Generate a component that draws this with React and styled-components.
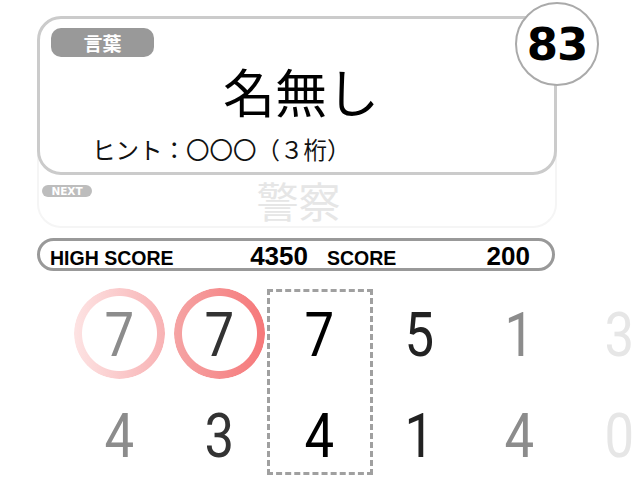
import React from "react";
import styled, { createGlobalStyle } from "styled-components";

const GlobalStyle = createGlobalStyle`
  html, body {
    margin: 0;
    padding: 0;
    background: #fff;
    overflow: hidden;
  }
  body {
    font-family: "Noto Sans CJK JP", "Noto Sans", sans-serif;
    color: #000;
  }
`;

const columns = [
  { top: "7", bottom: "4", tone: "#8c8c8c", ring: ["#fde3e3", "#f8b2b4"] },
  { top: "7", bottom: "3", tone: "#333333", ring: ["#f5a4a4", "#f6787a"] },
  { top: "7", bottom: "4", tone: "#000000", current: true },
  { top: "5", bottom: "1", tone: "#222222" },
  { top: "1", bottom: "4", tone: "#8c8c8c" },
  { top: "3", bottom: "0", tone: "#e6e6e6" },
];

const App = () => {
  return (
    <>
      <GlobalStyle />
      <Page>
        <Cards>
          <WordCard>
            <Badge>言葉</Badge>
            <Word>名無し</Word>
            <Hint>ヒント：〇〇〇（３桁）</Hint>
            <Timer>83</Timer>
          </WordCard>
          <NextCard>
            <NextBadge>NEXT</NextBadge>
            <NextWord>警察</NextWord>
          </NextCard>
        </Cards>
        <ScoreBar>
          <ScoreCell>
            <ScoreLabel>HIGH SCORE</ScoreLabel>
            <ScoreValue>4350</ScoreValue>
          </ScoreCell>
          <ScoreCell>
            <ScoreLabel>SCORE</ScoreLabel>
            <ScoreValue>200</ScoreValue>
          </ScoreCell>
        </ScoreBar>
        <DigitRow>
          {columns.map((col, i) => (
            <DigitColumn key={i} current={col.current}>
              <Digit tone={col.tone} ring={col.ring}>
                <Glyph>{col.top}</Glyph>
              </Digit>
              <Digit tone={col.tone}>
                <Glyph>{col.bottom}</Glyph>
              </Digit>
            </DigitColumn>
          ))}
        </DigitRow>
      </Page>
    </>
  );
};

export default App;

const Page = styled.div`
  width: 640px;
  height: 500px;
  box-sizing: border-box;
  padding: 16px 0 0 37px;
  overflow: hidden;
`;

const Cards = styled.div`
  width: 520px;
  display: flex;
  flex-direction: column;
`;

const WordCard = styled.div`
  position: relative;
  z-index: 1;
  height: 159px;
  box-sizing: border-box;
  border: 3px solid #cbcbcb;
  border-radius: 24px;
  background: #fff;
  padding: 9px 11px;
  display: flex;
  flex-direction: column;
`;

const Badge = styled.div`
  align-self: flex-start;
  width: 103px;
  height: 29px;
  border-radius: 10px;
  background: #999;
  color: #fff;
  font-weight: 700;
  font-size: 19px;
  line-height: 29px;
  text-align: center;
`;

const Word = styled.div`
  margin-top: 8px;
  padding-left: 8px;
  font-size: 52px;
  line-height: 52px;
  text-align: center;
  font-weight: 400;
`;

const Hint = styled.div`
  margin-top: 21px;
  padding-left: 41px;
  font-size: 23.5px;
  line-height: 23px;
  color: #111;
`;

const Timer = styled.div`
  position: absolute;
  top: -17px;
  left: 475px;
  width: 84px;
  height: 84px;
  box-sizing: border-box;
  border: 2px solid #aaa;
  border-radius: 50%;
  background: #fff;
  display: flex;
  align-items: center;
  justify-content: center;
  font-family: "DejaVu Sans", sans-serif;
  font-weight: 700;
  font-size: 45px;
  letter-spacing: -1px;
`;

const NextCard = styled.div`
  margin-top: -24px;
  height: 77px;
  box-sizing: border-box;
  border: 2px solid #f5f5f5;
  border-top: none;
  border-radius: 0 0 24px 24px;
  padding: 34px 0 0 3px;
  display: grid;
  grid-template-columns: 1fr auto 1fr;
  align-items: start;
`;

const NextBadge = styled.div`
  justify-self: start;
  width: 50px;
  height: 12px;
  border-radius: 6px;
  background: #bdbdbd;
  color: #fff;
  font-family: "DejaVu Sans", sans-serif;
  font-weight: 700;
  font-size: 10.5px;
  line-height: 12px;
  text-align: center;
`;

const NextWord = styled.div`
  margin-top: -6px;
  font-size: 42px;
  line-height: 42px;
  color: #e6e6e6;
`;

const ScoreBar = styled.div`
  margin-top: 10px;
  width: 518px;
  height: 33px;
  box-sizing: border-box;
  border: 3px solid #999;
  border-radius: 17px;
  padding: 0 0 4px 10px;
  display: grid;
  grid-template-columns: 258px 203px;
  column-gap: 19px;
  align-items: center;
  font-family: "Liberation Sans", sans-serif;
  font-weight: 700;
`;

const ScoreCell = styled.div`
  display: flex;
  justify-content: space-between;
  align-items: baseline;
`;

const ScoreLabel = styled.span`
  font-size: 19.5px;
`;

const ScoreValue = styled.span`
  font-size: 26px;
`;

const DigitRow = styled.div`
  margin-top: 13px;
  margin-left: 32px;
  display: flex;
`;

const DigitColumn = styled.div`
  position: relative;
  flex: 0 0 100px;
  display: flex;
  flex-direction: column;

  ${(p) =>
    p.current &&
    `
    &::after {
      content: "";
      position: absolute;
      top: 5px;
      bottom: 11px;
      left: -2px;
      right: -4px;
      border: 3px dashed #a0a0a0;
    }
  `}
`;

const Digit = styled.div`
  position: relative;
  z-index: 0;
  height: 101px;
  line-height: 101px;
  text-align: center;
  font-family: Roboto, "Noto Sans", sans-serif;
  font-size: 62px;
  color: ${(p) => p.tone};

  ${(p) =>
    p.ring &&
    `
    &::before {
      content: "";
      position: absolute;
      z-index: -1;
      width: 91px;
      height: 91px;
      left: calc(50% - 45.5px);
      top: calc(50% - 47px);
      border-radius: 50%;
      background: linear-gradient(90deg, ${p.ring[0]}, ${p.ring[1]});
      -webkit-mask: radial-gradient(circle closest-side, transparent 37px, #000 38px);
      mask: radial-gradient(circle closest-side, transparent 37px, #000 38px);
    }
  `}
`;

const Glyph = styled.span`
  display: inline-block;
  transform: scaleX(0.85);
`;
